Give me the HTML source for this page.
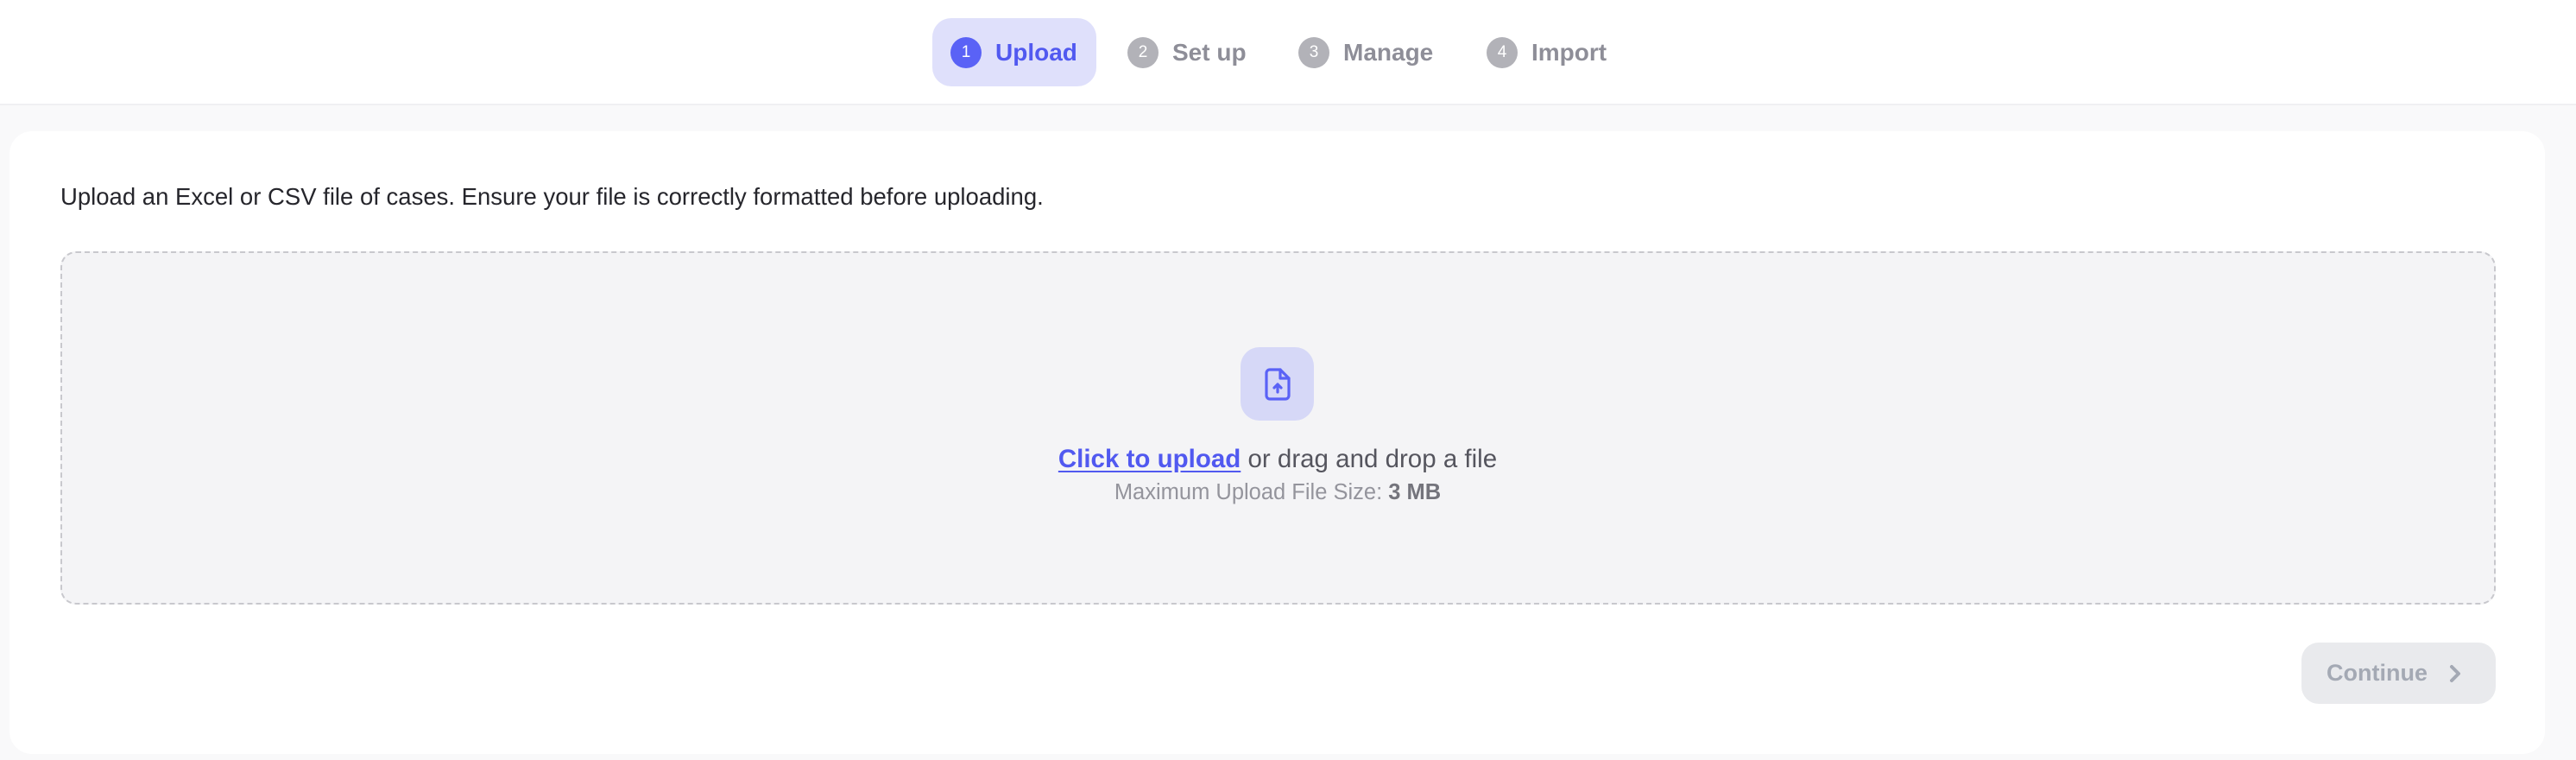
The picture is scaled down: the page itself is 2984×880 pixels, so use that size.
<!DOCTYPE html>
<html><head><style>
*{box-sizing:border-box;margin:0;padding:0}
body{width:2984px;height:880px;background:#f9f9fa;font-family:"Liberation Sans",sans-serif;position:relative;overflow:hidden}
.hdr{position:absolute;left:0;top:0;width:2984px;height:122px;background:#fff;border-bottom:2px solid #f0f0f2}
.step{position:absolute;top:21px;height:79px;display:flex;align-items:center;font-size:28px;font-weight:bold;color:#8e8e98}
.num{width:36px;height:36px;border-radius:50%;background:#b2b2b8;color:#fff;font-size:19px;display:flex;align-items:center;justify-content:center;margin-right:16px;font-weight:normal}
.pill{position:absolute;left:1080px;top:21px;width:190px;height:79px;background:#dfe0fb;border-radius:22px}
.card{position:absolute;left:11px;top:152px;width:2937px;height:721px;background:#fff;border-radius:26px}
.intro{position:absolute;left:70px;top:212px;font-size:27.5px;color:#26262c}
.drop{position:absolute;left:70px;top:291px;width:2821px;height:409px;background:#f4f4f6;border:2.5px dashed #c8c8cd;border-radius:18px}
.ibox{position:absolute;left:1437px;top:402px;width:85px;height:85px;border-radius:22px;background:#d6d8f7;display:flex;align-items:center;justify-content:center}
.line1{position:absolute;left:0;width:2960px;top:515px;text-align:center;font-size:29.5px;color:#55555e}
.line1 a{color:#5159f0;font-weight:bold;text-decoration:underline;text-underline-offset:4px}
.line2{position:absolute;left:0;width:2960px;top:556px;text-align:center;font-size:25.5px;color:#94949c}
.line2 b{color:#74747c}
.btn{position:absolute;left:2666px;top:744px;width:225px;height:71px;background:#e9eaed;border-radius:20px;color:#a4a9b4;font-size:27px;font-weight:bold;display:flex;align-items:center;padding-left:29px}
</style></head><body>
<div class="hdr">
<div class="pill"></div>
<div class="step" style="left:1101px;color:#5159f0"><span class="num" style="background:#5a62f6">1</span>Upload</div>
<div class="step" style="left:1306px"><span class="num">2</span>Set up</div>
<div class="step" style="left:1504px"><span class="num">3</span>Manage</div>
<div class="step" style="left:1722px"><span class="num">4</span>Import</div>
</div>
<div class="card"></div>
<div class="intro">Upload an Excel or CSV file of cases. Ensure your file is correctly formatted before uploading.</div>
<div class="drop"></div>
<div class="ibox"><svg width="36" height="40" viewBox="0 0 36 40" fill="none" stroke="#5a62f6" stroke-width="3.2" stroke-linecap="round" stroke-linejoin="round"><path d="M21 3H9a4 4 0 0 0-4 4v26a4 4 0 0 0 4 4h18a4 4 0 0 0 4-4V13z"/><path d="M21 3v10h10"/><path d="M18 29V20M14 24l4-4 4 4"/></svg></div>
<div class="line1"><a>Click to upload</a> or drag and drop a file</div>
<div class="line2">Maximum Upload File Size: <b>3 MB</b></div>
<div class="btn">Continue<svg style="margin-left:24px" width="16" height="24" viewBox="0 0 16 24"><path d="M4 4l8 8-8 8" fill="none" stroke="#a4a9b4" stroke-width="4" stroke-linecap="round" stroke-linejoin="round"/></svg></div>
</body></html>
